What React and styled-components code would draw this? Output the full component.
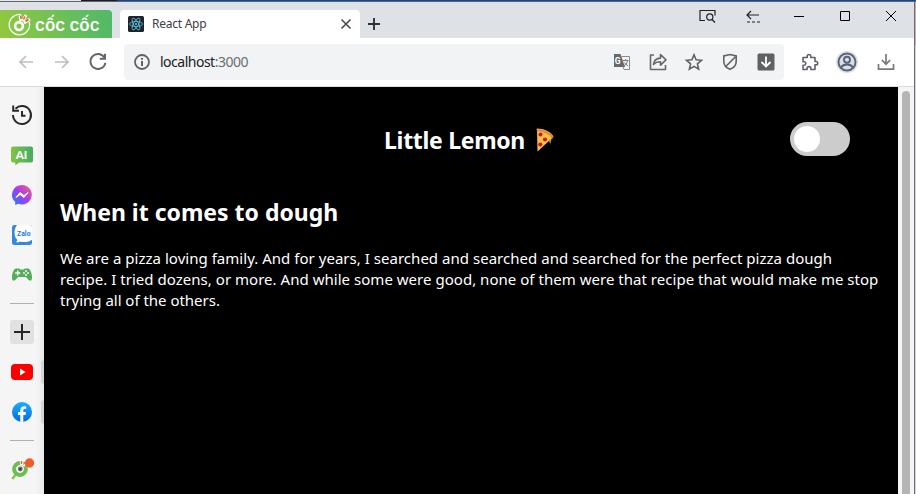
import React from 'react';
import styled, { createGlobalStyle } from 'styled-components';

const GlobalStyle = createGlobalStyle`
  * { box-sizing: border-box; }
  html, body { margin: 0; padding: 0; overflow: hidden; background: #fff; }
  svg { display: block; flex: none; overflow: visible; }
`;

const Screen = styled.div`
  width: 916px;
  height: 494px;
  display: grid;
  grid-template-columns: 914px 2px;
  grid-template-rows: 2px 492px;
  font-family: "Noto Sans", "Open Sans", sans-serif;
  overflow: hidden;
`;
const Desktop = styled.div`
  grid-column: 1 / 3;
  border-bottom: 1px solid #5d6470;
  background: linear-gradient(90deg, #e6e8ea 81px, #1d1d1f 81px, #1d1d1f 117px, #0b479d 117px);
`;
const WindowEdge = styled.div`
  border-left: 1px solid #6c6e72;
  background: linear-gradient(#c9a9b4 43px, #d4d4d4 43px);
`;
const Window = styled.div`
  display: flex;
  flex-direction: column;
  min-width: 0;
`;
const TabBar = styled.div`
  height: 36px;
  flex: none;
  display: flex;
  align-items: flex-end;
  background: #dee1e6;
`;
const Brand = styled.div`
  width: 112px;
  height: 28px;
  margin-right: 8px;
  padding-left: 8px;
  display: flex;
  align-items: center;
  gap: 4px;
  color: #fff;
  background: linear-gradient(80deg, #92c83e, #4fb969);
  border-top-right-radius: 4px;
`;
const BrandName = styled.span`
  font: 600 17px/26px Inter, sans-serif;
  letter-spacing: 0;
  white-space: nowrap;
  padding-top: 2px;
`;
const Tab = styled.div`
  width: 240px;
  height: 28px;
  padding: 0 8px;
  display: flex;
  align-items: center;
  gap: 8px;
  background: #fff;
  border-radius: 4px 4px 0 0;
`;
const TabTitle = styled.span`
  flex: 1;
  font-size: 12px;
  line-height: 16px;
  letter-spacing: -0.25px;
  color: #3c4043;
`;
const NewTab = styled.div`
  width: 28px;
  height: 28px;
  display: grid;
  place-items: center;
`;
const WindowControls = styled.div`
  height: 36px;
  margin-left: auto;
  display: flex;
`;
const Control = styled.div`
  width: 46px;
  height: 28px;
  display: grid;
  place-items: center;
`;
const Toolbar = styled.div`
  height: 49px;
  flex: none;
  padding: 6px 9px 6px 8px;
  display: flex;
  background: #fff;
  border-bottom: 1px solid #d9dcdf;
`;
const ToolButton = styled.div`
  width: ${(p) => p.$width || 36}px;
  height: 36px;
  display: grid;
  place-items: center;
`;
const AddressBar = styled.div`
  width: 660px;
  height: 36px;
  margin: 0 7px 0 8px;
  display: flex;
  align-items: center;
  background: #f1f3f4;
  border-radius: 4px;
`;
const Address = styled.span`
  flex: 1;
  font-size: 14px;
  line-height: 20px;
  letter-spacing: -0.5px;
  color: #202124;
  span { color: #6b6e72; }
`;
const Body = styled.div`
  flex: 1;
  display: grid;
  grid-template-columns: 44px 854px 16px;
  min-height: 0;
`;
const Sidebar = styled.aside`
  padding-top: 8px;
  background: linear-gradient(90deg, #f5f5f5 36px, #e9e9e9 44px);
`;
const SideItem = styled.div`
  position: relative;
  height: 40px;
  display: grid;
  place-items: center;
`;
const OpenMark = styled.i`
  position: absolute;
  right: 0;
  top: 8px;
  width: 3px;
  height: 24px;
  border-radius: 3px 0 0 3px;
  background: #d5d5d5;
`;
const AddBox = styled.div`
  width: 24px;
  height: 24px;
  border-radius: 3px;
  background: #e1e1e1;
  display: grid;
  place-items: center;
`;
const Separator = styled.div`
  height: 1px;
  margin: 8px 10px;
  background: #b1b1b1;
`;
const Page = styled.main`
  background: #000;
  color: #fff;
  padding: 0 16px;
`;
const Header = styled.header`
  height: 104px;
  padding: 0 32px 0 324px;
  display: flex;
  justify-content: space-between;
  align-items: center;
`;
const Title = styled.h1`
  margin: 2px 0 0;
  display: flex;
  align-items: center;
  gap: 11px;
  font-size: 23px;
  line-height: 32px;
  font-weight: 700;
  letter-spacing: -0.3px;
  white-space: nowrap;
`;
const Switch = styled.div`
  width: 60px;
  height: 34px;
  padding: 4px;
  border-radius: 17px;
  background: #ccc;
`;
const Knob = styled.div`
  width: 26px;
  height: 26px;
  border-radius: 50%;
  background: #fff;
`;
const Heading = styled.h2`
  margin: 5px 0 20px;
  font-size: 23px;
  line-height: 32px;
  font-weight: 700;
  letter-spacing: 0;
`;
const Paragraph = styled.p`
  margin: 0;
  font-size: 15px;
  line-height: 21px;
`;
const Line = styled.span`
  display: block;
  width: max-content;
  white-space: nowrap;
  letter-spacing: ${(p) => p.$spacing}px;
`;
const ScrollTrack = styled.div`
  background: #f5f5f5;
  padding: 4px 4px 0;
`;
const ScrollThumb = styled.div`
  height: 420px;
  border-radius: 4px;
  background: #b5b5b5;
`;

const Icon = ({ w = 20, h = w, children, ...rest }) => (
  <svg width={w} height={h} viewBox={`0 0 ${w} ${h}`} fill="none" {...rest}>{children}</svg>
);

const BrandMark = () => (
  <Icon w={23} stroke="#fff">
    <path d="M13 1.5A10.2 10.2 0 1 0 21.3 9" strokeWidth="1.3" />
    <circle cx="11" cy="13" r="3.900" strokeWidth="2.600" />
    <path d="M13 8 12 2.500M15 8l3-6M16 10l6-4" strokeWidth="3" />
    <path d="m13.200 6-.600-3M15.500 6.500l1.500-3M17.500 8.500l3-2" stroke="#ed5a32" strokeWidth="1.600" />
  </Icon>
);
const ReactMark = () => (
  <Icon w={16} stroke="#5ac8e6" strokeWidth=".8">
    <rect width="16" height="16" rx="1.5" fill="#20232a" stroke="none" />
    <ellipse cx="8" cy="8" rx="6.5" ry="2.5" />
    <ellipse cx="8" cy="8" rx="6.5" ry="2.5" transform="rotate(60 8 8)" />
    <ellipse cx="8" cy="8" rx="6.5" ry="2.5" transform="rotate(120 8 8)" />
    <circle cx="8" cy="8" r="1.1" fill="#5ac8e6" stroke="none" />
  </Icon>
);
const Arrow = ({ flip }) => (
  <Icon w={14} stroke="#bdbfc1" strokeWidth="1.7">
    <path d={flip ? 'M0 7h13M7 1l6 6-6 6' : 'M14 7H1M7 1 1 7l6 6'} />
  </Icon>
);
const Reload = () => (
  <Icon w={18} stroke="#5f6368" strokeWidth="1.9">
    <path d="M15.4 4.5A7.5 7.5 0 1 0 16.4 9.8" /><path d="M16 .8v5h-5.2" />
  </Icon>
);
const Info = () => (
  <Icon w={16} stroke="#5f6368" strokeWidth="1.8">
    <circle cx="8" cy="8" r="7" /><path d="M8 7v5M8 4v1.8" strokeWidth="2" />
  </Icon>
);
const Translate = () => (
  <Icon w={18}>
    <path d="M1 1h6.5L12 14H1z" fill="#66696c" />
    <path d="M8.5 3.5h8v13H11l-1-3" stroke="#888b8e" />
    <text x="1.8" y="10.5" fill="#fff" fontFamily="Roboto, sans-serif" fontWeight="700" fontSize="8.5">G</text>
    <path d="M10 7.5h5.5M12.7 6v1.5M14.6 7.5c-.5 3-2 4.4-4 5.5M11.5 9.5c1 1.6 2 2.5 3.6 3.4" stroke="#777a7d" />
  </Icon>
);
const Share = () => (
  <Icon w={18} stroke="#66696c" strokeWidth="1.6" strokeLinejoin="round">
    <path d="M5 2H1.5v14.5h15V12" />
    <path d="M4.5 11.5c.3-4 2.8-6.2 7-6.4V1.5L17 6.8l-5.5 5.3V8.7c-3.4 0-5.4.7-7 2.8z" />
  </Icon>
);
const Star = () => (
  <Icon w={18} stroke="#5f6368" strokeWidth="1.6">
    <path d="m9 1.8 2.1 5 5.4.5-4.1 3.6 1.2 5.3L9 13.4l-4.6 2.8 1.2-5.3-4.1-3.6 5.4-.5z" />
  </Icon>
);
const Shield = () => (
  <Icon w={18} stroke="#5f6368" strokeWidth="1.6">
    <path d="M9 1.500 2.800 3v5.600c0 3.500 2.500 6.300 6.200 7.700 3.700-1.400 6.200-4.200 6.200-7.700V3zM4.800 13.500 14.200 4" />
  </Icon>
);
const SaveBox = () => (
  <Icon w={18} stroke="#fff" strokeWidth="1.8">
    <rect x=".5" y=".5" width="17" height="17" rx="1.5" fill="#616161" stroke="none" />
    <path d="M9 3.5v10M4.5 9 9 13.5 13.5 9" />
  </Icon>
);
const Puzzle = () => (
  <Icon w={18} stroke="#5f6368" strokeWidth="1.6" strokeLinejoin="round">
    <path d="M2 4.5h4.2V3.3a1.8 1.8 0 0 1 3.6 0v1.2H14v4h1a1.7 1.7 0 0 1 0 3.4h-1v4.6H9.9v-1a1.9 1.9 0 0 0-3.8 0v1H2v-4.2h1a1.8 1.8 0 0 0 0-3.6H2z" />
  </Icon>
);
const Profile = () => (
  <Icon w={22} stroke="#5a6478" strokeWidth="1.9">
    <circle cx="11" cy="11" r="11" fill="#dadee5" stroke="none" />
    <circle cx="11" cy="11" r="8.5" /><circle cx="11" cy="8.8" r="3" />
    <path d="M5 16.5c1.3-2.2 3.3-3 6-3s4.7.8 6 3" />
  </Icon>
);
const Download = () => (
  <Icon w={18} stroke="#77797c" strokeWidth="1.7">
    <path d="M9 1v10M4.8 7 9 11.2 13.2 7M1.5 11v5.2h15V11" />
  </Icon>
);
const History = () => (
  <Icon w={22} stroke="#292929" strokeWidth="2">
    <path d="M4.5 4.8A9 9 0 1 1 2 11" /><path d="M2.2 1.5v5.2H8" /><path d="M11 7v4.8h3.5" />
  </Icon>
);
const Chat = () => (
  <Icon w={22}>
    <defs><linearGradient id="chat"><stop stopColor="#82c341" /><stop offset="1" stopColor="#43ad64" /></linearGradient></defs>
    <path d="M2 2.500h18a2 2 0 0 1 2 2v12a2 2 0 0 1-2 2H8L4.300 21.500v-3H2a2 2 0 0 1-2-2v-12a2 2 0 0 1 2-2z" fill="url(#chat)" />
    <text x="4.800" y="14.500" fill="#fff" fontFamily="Lato, sans-serif" fontWeight="900" fontSize="11.500">AI</text>
  </Icon>
);
const Messenger = () => (
  <Icon w={20}>
    <defs><linearGradient id="msg" x1="0" y1="1" x2="1" y2="0"><stop stopColor="#1683ff" /><stop offset=".5" stopColor="#a43bf4" /><stop offset="1" stopColor="#ff626d" /></linearGradient></defs>
    <path d="M10 0a10 9.7 0 0 0-6.800 16.800V20l3.100-1.200A10 9.700 0 1 0 10 0z" fill="url(#msg)" />
    <path d="m4 12.500 4-5 4 3 4-3-4 5-4-3z" fill="#fff" stroke="#fff" strokeLinejoin="round" />
  </Icon>
);
const Zalo = () => (
  <Icon w={20}>
    <rect width="20" height="20" rx="2.5" fill="#3489d8" />
    <path d="M5 0h12.5A2.5 2.5 0 0 1 20 2.5v12.2c-3 2.5-8 3-12 1.8-1 .8-2.3 1-4 .7 1-.8 1.3-1.6 1.1-2.6C1.7 11.2 1.7 4 5 0z" fill="#fff" />
    <text x="5" y="11" fill="#167bd8" fontFamily="Roboto, sans-serif" fontWeight="700" fontSize="6.8" textLength="13.5">Zalo</text>
  </Icon>
);
const Gamepad = () => (
  <Icon w={20}>
    <path d="M4 3.500h3l1.500 1h3l1.500-1h3c2.500 0 4 5.500 4 9 0 4-2.500 3.800-4.200 1.500L14 12H6l-1.800 2C2.500 16.300 0 16.500 0 12.500c0-3.500 1.500-9 4-9z" fill="#55ad59" />
    <path d="M5.700 5.500v5M3.200 8h5" stroke="#fff" strokeWidth="1.400" />
    <g fill="#fff"><circle cx="14" cy="6" r=".9" /><circle cx="14" cy="10" r=".9" /><circle cx="12" cy="8" r=".9" /><circle cx="16" cy="8" r=".9" /></g>
  </Icon>
);
const YouTube = () => (
  <Icon w={22} h={16}><rect width="22" height="16" rx="4" fill="#f00" /><path d="m9 4.500 5.500 3.500L9 11.500z" fill="#fff" /></Icon>
);
const Facebook = () => (
  <Icon w={20}>
    <defs><linearGradient id="fb" x1="0" y1="0" x2="0" y2="1"><stop stopColor="#19aefc" /><stop offset="1" stopColor="#0668df" /></linearGradient></defs>
    <circle cx="10" cy="10" r="10" fill="url(#fb)" />
    <path d="M8.300 19.800V13H6v-3h2.300V8.200C8.300 5.500 9.800 4.200 12.200 4.200l2 .2v2.400h-1.400c-1.100 0-1.500.7-1.500 1.500V10H14l-.5 3h-2.200v6.800a10 10 0 0 1-3 0z" fill="#fff" />
  </Icon>
);
const CocSearch = () => (
  <Icon w={22} h={22}>
    <path d="m1.300 21 4-5.500" stroke="#8dc642" strokeWidth="2.400" />
    <circle cx="9" cy="11" r="5.700" stroke="#6dbd50" strokeWidth="4.400" />
    <circle cx="9" cy="11" r="3.700" fill="#fff" />
    <circle cx="9.300" cy="11" r="2.400" fill="#6a6d72" /><circle cx="9.300" cy="11" r="1" fill="#333" />
    <path d="m10.500 7-.500-5M12 8l3-5" stroke="#fff" strokeWidth="2.800" />
    <path d="m10.500 6-.300-3M12.500 6.500 14 4" stroke="#ec5c36" strokeWidth="1.300" />
    <circle cx="18.500" cy="5" r="4.700" fill="#f15b2d" />
  </Icon>
);
const Pizza = () => (
  <Icon w={18} h={24}>
    <path d="M1 1c6 .5 12 3.300 15.500 8l-1.200 2.300-.700 4-1.700-2.300L1.500 23.500z" fill="#fdc044" />
    <path d="M.5.800C7.500.200 14.500 3.500 17.500 8.500l-1 2.200C12.500 5.500 7 3.200.800 3z" fill="#d9843d" />
    <path d="M1 1.200c6-.3 12 2.500 15.700 7" stroke="#efaa62" />
    <g fill="#ba2026"><circle cx="4.500" cy="6.500" r="2.100" /><circle cx="9" cy="11.500" r="2.100" /><circle cx="4.300" cy="16.500" r="2.100" /></g>
    <path d="M14 11.500v4" stroke="#806030" />
  </Icon>
);

export default function App() {
  return (
    <Screen>
      <GlobalStyle />
      <Desktop />
      <Window>
        <TabBar>
          <Brand><BrandMark /><BrandName>cốc cốc</BrandName></Brand>
          <Tab>
            <ReactMark />
            <TabTitle>React App</TabTitle>
            <Icon w={12} stroke="#47494c" strokeWidth="1.600"><path d="m1.500 1.500 9 9M10.500 1.500l-9 9" /></Icon>
          </Tab>
          <NewTab><Icon w={12} stroke="#303236" strokeWidth="1.900"><path d="M6 0v12M0 6h12" /></Icon></NewTab>
          <WindowControls>
            <Control><Icon w={17} h={13} stroke="#222" strokeWidth="1.200"><path d="M6 10.500H1V.500h15v5" /><circle cx="10.800" cy="7" r="3.100" /><path d="m13 9.500 3 3" /></Icon></Control>
            <Control><Icon w={14} h={13} stroke="#222" strokeWidth="1.200"><path d="M13 5H1M5 1 1 5l4 4" /><path d="M1 12h13" strokeDasharray="3 2" /></Icon></Control>
            <Control><Icon w={10} h={1}><path d="M0 .500h10" stroke="#000" /></Icon></Control>
            <Control><Icon w={10} stroke="#000"><path d="M.500.500h9v9h-9z" /></Icon></Control>
            <Control><Icon w={10} stroke="#000"><path d="m0 0 10 10M10 0 0 10" /></Icon></Control>
          </WindowControls>
        </TabBar>
        <Toolbar>
          <ToolButton><Arrow /></ToolButton>
          <ToolButton><Arrow flip /></ToolButton>
          <ToolButton><Reload /></ToolButton>
          <AddressBar>
            <ToolButton><Info /></ToolButton>
            <Address>localhost<span>:3000</span></Address>
            <ToolButton><Translate /></ToolButton>
            <ToolButton><Share /></ToolButton>
            <ToolButton><Star /></ToolButton>
            <ToolButton><Shield /></ToolButton>
            <ToolButton><SaveBox /></ToolButton>
          </AddressBar>
          <ToolButton $width={37}><Puzzle /></ToolButton>
          <ToolButton $width={38}><Profile /></ToolButton>
          <ToolButton $width={39}><Download /></ToolButton>
        </Toolbar>
        <Body>
          <Sidebar>
            <SideItem><History /></SideItem>
            <SideItem><Chat /></SideItem>
            <SideItem><Messenger /></SideItem>
            <SideItem><Zalo /></SideItem>
            <SideItem><Gamepad /></SideItem>
            <Separator />
            <SideItem><AddBox><Icon w={16} stroke="#252525" strokeWidth="2"><path d="M8 0v16M0 8h16" /></Icon></AddBox></SideItem>
            <SideItem><YouTube /><OpenMark /></SideItem>
            <SideItem><Facebook /><OpenMark /></SideItem>
            <Separator />
            <SideItem><CocSearch /></SideItem>
          </Sidebar>
          <Page>
            <Header>
              <Title>Little Lemon <Pizza /></Title>
              <Switch><Knob /></Switch>
            </Header>
            <Heading>When it comes to dough</Heading>
            <Paragraph>
              <Line $spacing={0.028}>We are a pizza loving family. And for years, I searched and searched and searched for the perfect pizza dough</Line>
              <Line $spacing={0.028}>recipe. I tried dozens, or more. And while some were good, none of them were that recipe that would make me stop</Line>
              <Line $spacing={-0.02}>trying all of the others.</Line>
            </Paragraph>
          </Page>
          <ScrollTrack><ScrollThumb /></ScrollTrack>
        </Body>
      </Window>
      <WindowEdge />
    </Screen>
  );
}
